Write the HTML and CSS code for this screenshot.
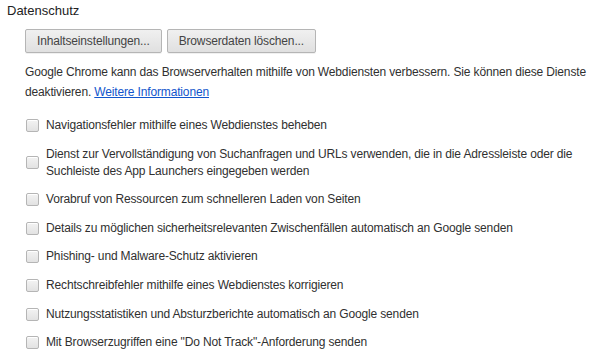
FILE: index.html
```html
<!DOCTYPE html>
<html lang="de">
<head>
  <meta charset="UTF-8" />
  <title>Datenschutz</title>
  <link rel="stylesheet" href="styles.css">
</head>
<body>

<section class="privacy">
  <h3 class="section-title">Datenschutz</h3>
  <div class="section-body">
    <div class="btn-row">
      <button class="btn">Inhaltseinstellungen...</button>
      <button class="btn">Browserdaten löschen...</button>
    </div>

    <p class="intro">Google Chrome kann das Browserverhalten mithilfe von Webdiensten verbessern. Sie können diese Dienste deaktivieren. <a href="#">Weitere Informationen</a></p>

    <label class="check-row"><input type="checkbox"><span>Navigationsfehler mithilfe eines Webdienstes beheben</span></label>
    <label class="check-row"><input type="checkbox"><span>Dienst zur Vervollständigung von Suchanfragen und URLs verwenden, die in die Adressleiste oder die Suchleiste des App Launchers eingegeben werden</span></label>
    <label class="check-row"><input type="checkbox"><span>Vorabruf von Ressourcen zum schnelleren Laden von Seiten</span></label>
    <label class="check-row"><input type="checkbox"><span>Details zu möglichen sicherheitsrelevanten Zwischenfällen automatisch an Google senden</span></label>
    <label class="check-row"><input type="checkbox"><span>Phishing- und Malware-Schutz aktivieren</span></label>
    <label class="check-row"><input type="checkbox"><span>Rechtschreibfehler mithilfe eines Webdienstes korrigieren</span></label>
    <label class="check-row"><input type="checkbox"><span>Nutzungsstatistiken und Absturzberichte automatisch an Google senden</span></label>
    <label class="check-row"><input type="checkbox"><span>Mit Browserzugriffen eine "Do Not Track"-Anforderung senden</span></label>
  </div>
</section>

</body>
</html>
```

FILE: styles.css
```css
*{box-sizing:border-box}

body {
  margin:0;
  background:#fff;
  color:#303030;
  font-family:'Liberation Sans',Arial,sans-serif;
  font-size:12px;
  letter-spacing:-.15px;
}

.privacy {padding:3px 0 0 7px}

.section-title {
  margin:0;
  font-size:13px;
  font-weight:normal;
  color:#222;
  line-height:16px;
  letter-spacing:0;
}

.section-body {padding:10px 0 0 18px}

.btn-row {display:flex;gap:5px}

.btn {
  font:inherit;
  letter-spacing:inherit;
  color:#444;
  height:24px;
  margin:0;
  padding:0 11px;
  border:1px solid #b5b5b5;
  border-radius:2px;
  background:linear-gradient(#f0f0f0,#e0e0e0);
  box-shadow:0 1px 0 rgba(0,0,0,.06);
}

.intro {
  margin:9px 0 15px;
  line-height:20px;
  width:568px;
}

.intro a {color:#15c}

.check-row {
  display:flex;
  align-items:center;
  gap:7px;
  margin:0 0 11.6px 1px;
  line-height:17px;
  width:550px;
}

.check-row input {
  appearance:none;
  flex:none;
  width:13px;
  height:13px;
  margin:0;
  border:1px solid #b5b5b5;
  border-radius:2px;
  background:linear-gradient(#f3f3f3,#e2e2e2);
  box-shadow:inset 0 1px 0 #fff;
}
```
